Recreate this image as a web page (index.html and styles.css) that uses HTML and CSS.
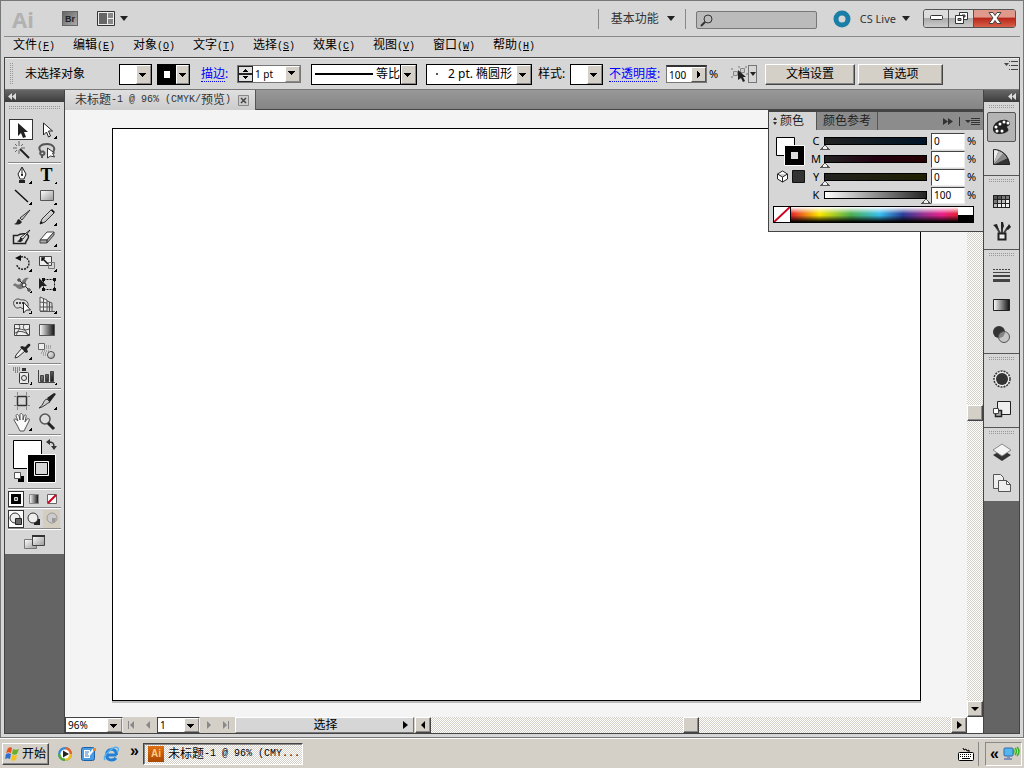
FILE: index.html
```html
<!DOCTYPE html>
<html lang="zh-CN">
<head>
    <meta charset="UTF-8">
    <meta name="viewport" content="width=device-width, initial-scale=1.0">
    <title>未标题-1 @ 96% (CMYK/预览)</title>
    <link rel="stylesheet" href="styles.css">
</head>
<body>

<svg class="defs" width="0" height="0" aria-hidden="true">
    <defs>
        <linearGradient id="gw" x1="0" y1="0" x2="1" y2="1"><stop offset="0" stop-color="#fff"/><stop offset="1" stop-color="#999"/></linearGradient>
        <linearGradient id="gb" x1="0" y1="0" x2="1" y2="0"><stop offset="0" stop-color="#fff"/><stop offset="1" stop-color="#111"/></linearGradient>
        <linearGradient id="gd" x1="0" y1="0" x2="1" y2="1"><stop offset="0" stop-color="#999"/><stop offset="1" stop-color="#111"/></linearGradient>
    </defs>
</svg>

<div class="window">
    <header class="titlebar">
        <span class="logo">Ai</span>
        <button class="bridge">Br</button>
        <button class="arrange" aria-label="排列文档">
            <svg width="18" height="15"><path d="M.5.5h17v14H.5z" fill="#eee" stroke="#333"/><path d="M2 2h8v11H2z" fill="#666"/><path d="M11 2h5v5h-5zM11 8h5v5h-5z" fill="#888"/></svg>
            <i class="down"></i>
        </button>
        <span class="spacer"></span>
        <button class="workspace">基本功能 <i class="down"></i></button>
        <label class="search">
            <svg width="13" height="13" fill="none" stroke="#333"><circle cx="8" cy="5" r="4"/><path d="M5 8l-4 4" stroke-width="2"/></svg>
            <input type="search" aria-label="搜索">
        </label>
        <button class="cslive">
            <svg width="18" height="18"><circle cx="9" cy="9" r="6" fill="none" stroke="#1b7ea6" stroke-width="5"/></svg>
            CS Live <i class="down"></i>
        </button>
        <div class="winbuttons">
            <button aria-label="最小化"><svg width="13" height="6"><rect x=".5" y=".5" width="12" height="4" rx="1" fill="#fff" stroke="#333"/></svg></button>
            <button aria-label="还原"><svg width="13" height="12" fill="#fff" stroke="#333"><path d="M4.500.5h8v7h-8z"/><path d="M7 3h3v2H7z" fill="#999"/><path d="M.5 3.500h8v8h-8z"/><path d="M3 6.500h3v2H3z" fill="#999"/></svg></button>
            <button class="close" aria-label="关闭"><svg width="14" height="12"><path d="M1 .5h4l2 3 2-3h4l-4 5.500 4 5.500H9l-2-3-2 3H1L5 6z" fill="#fff" stroke="#444"/></svg></button>
        </div>
    </header>

    <nav class="menubar">
        <button>文件<span class="half">(<u>F</u>)</span></button>
        <button>编辑<span class="half">(<u>E</u>)</span></button>
        <button>对象<span class="half">(<u>O</u>)</span></button>
        <button>文字<span class="half">(<u>T</u>)</span></button>
        <button>选择<span class="half">(<u>S</u>)</span></button>
        <button>效果<span class="half">(<u>C</u>)</span></button>
        <button>视图<span class="half">(<u>V</u>)</span></button>
        <button>窗口<span class="half">(<u>W</u>)</span></button>
        <button>帮助<span class="half">(<u>H</u>)</span></button>
    </nav>

    <div class="frame">
        <div class="controlbar">
            <span class="vgrip"></span>
            <span class="selection">未选择对象</span>
            <button class="swatchpick" aria-label="填色"><span></span></button>
            <button class="swatchpick stroke" aria-label="描边颜色"><span></span></button>
            <a href="#stroke" class="panel-link weight-link">描边</a><span class="colon">:</span>
            <span class="weight">
                <span class="spin"><button aria-label="增加"></button><button aria-label="减少"></button></span>
                <span class="combo"><select aria-label="描边粗细"><option>1 pt</option></select></span>
            </span>
            <span class="combo dark profile">
                <svg width="58" height="2"><path d="M0 1h58" stroke="#000" stroke-width="2"/></svg>
                <select aria-label="宽度配置"><option>等比</option></select>
            </span>
            <span class="combo dark brush">
                <i class="dot"></i>
                <select aria-label="画笔"><option>2 pt. 椭圆形</option></select>
            </span>
            <span class="style-label">样式:</span>
            <button class="swatchpick" aria-label="样式"><span></span></button>
            <a href="#opacity" class="panel-link opacity-link">不透明度</a><span class="colon">:</span>
            <span class="opacity"><input type="text" value="100" aria-label="不透明度"><button aria-label="不透明度滑块"></button></span>
            <span class="percent">%</span>
            <button class="similar" aria-label="选择类似的对象">
                <svg width="17" height="17"><path d="M2.500 5.500h4v4h-4zM9.500 2.500h4v4h-4z" fill="#ccc" stroke="#888"/><path d="M0 3h2M7 1h2M14 1h2M0 11h2M15 8h2" stroke="#777"/><path d="M7 4v10l3-2 2 4 2-1-2-4h3z" fill="#222"/></svg>
                <span><i class="down small"></i></span>
            </button>
            <button class="classic setup">文档设置</button>
            <button class="classic prefs">首选项</button>
            <span class="spacer"></span>
            <button class="panelmenu" aria-label="面板菜单"><svg width="14" height="9"><path d="M0 2h5L2.500 5z" fill="#444"/><path d="M5 .5h1M7 .5h7M5 4.500h1M7 4.500h7M5 8.500h1M7 8.500h7" stroke="#444"/></svg></button>
        </div>

        <div class="work">
            <aside class="tools">
                <div class="dockhead"><svg width="8" height="7"><path d="M4 0v7L0 3.500zM8 0v7L4 3.500z" fill="#ddd"/></svg></div>
                <div class="toolbox">
                    <div class="grip"></div>
                    <div class="group">
                        <button class="on" aria-label="选择"><svg width="20" height="20"><path d="M7 3v13l3-3 2 5 3-1-2-5h4z" fill="#222"/></svg></button>
                        <button class="more" aria-label="直接选择"><svg width="20" height="20"><path d="M6.500 3v12l3-3 2 5 2-1-2-5h4z" fill="#fff" stroke="#222"/></svg></button>
                        <button aria-label="魔棒"><svg width="20" height="20" fill="none" stroke="#666"><path d="M7 0v5M7 9v4M1 7h4M9 7h4M3 3l2 2M9 5l2-2M3 11l2-2"/><path d="M8 8l9 9" stroke="#222" stroke-width="2"/></svg></button>
                        <button aria-label="套索"><svg width="20" height="20" fill="none" stroke="#555" stroke-width="2"><path d="M4 11C0 6 4 3 10 3s9 4 6 8M4 11c3-2 5 2 2 3-2 1-4-2-2-3M5 14v3" /><path d="M10.500 7v10l3-2 4 1-2-4h2z" fill="#fff" stroke="#333" stroke-width="1"/></svg></button>
                    </div>
                    <div class="group">
                        <button class="more" aria-label="钢笔"><svg width="20" height="20"><path d="M10 2l4 7-2 5H8L6 9z" fill="#fff" stroke="#222"/><path d="M10 3v7" stroke="#222"/><circle cx="10" cy="10" r="1"/><path d="M7 15h6v3H7z" fill="#222"/></svg></button>
                        <button class="more type" aria-label="文字">T</button>
                        <button class="more" aria-label="直线段"><svg width="20" height="20"><path d="M3 4l13 12" stroke="#111" stroke-width="1.500"/></svg></button>
                        <button class="more" aria-label="矩形"><svg width="20" height="20"><path d="M3.500 4.500h13v10h-13z" fill="url(#gw)" stroke="#555"/></svg></button>
                        <button aria-label="画笔"><svg width="20" height="20"><path d="M18 3l-8 10-2-2z" fill="#ccc" stroke="#333"/><path d="M2 17c4-1 2-4 5-5l3 3c-2 3-5 3-8 2z" fill="#222"/></svg></button>
                        <button class="more" aria-label="铅笔"><svg width="20" height="20"><path d="M3 17l2-5 9-9 3 3-9 9z" fill="url(#gw)" stroke="#333"/><path d="M3 17l1-3 2 2zM14 3l3 3 1-1-3-3z" fill="#111"/></svg></button>
                        <button aria-label="斑点画笔"><svg width="20" height="20"><path d="M1.500 7.500h4c4-3 11-2 11 1s-3 4-3 7h-12z" fill="#ddd" stroke="#222" stroke-width="1.500"/><path d="M18 2l-7 9-3-1z" fill="#eee" stroke="#222"/><path d="M5 13c3 0 2-3 4-3l2 2c-1 2-4 3-6 1z" fill="#222"/></svg></button>
                        <button class="more" aria-label="橡皮擦"><svg width="20" height="20"><path d="M3 12l7-8h7l-7 8z" fill="#fff" stroke="#444"/><path d="M3 12h7v3H3zM10 12l7-8v3l-7 8z" fill="#aaa" stroke="#444"/></svg></button>
                    </div>
                    <div class="group">
                        <button class="more" aria-label="旋转"><svg width="20" height="20"><path d="M6 5c5-3 11 0 11 5 0 8-11 8-12 2" fill="none" stroke="#222" stroke-width="1.500" stroke-dasharray="2 1"/><path d="M3 5l6-3v6z" fill="#111"/></svg></button>
                        <button class="more" aria-label="比例缩放"><svg width="20" height="20"><path d="M2.500 3.500h12v9h-12z" fill="#eee" stroke="#444"/><path d="M11.500 9.500h6v6h-6z" fill="none" stroke="#777"/><path d="M5 5l6 6M5 8V5h3" stroke="#111" stroke-width="1.500" fill="none"/></svg></button>
                        <button class="more" aria-label="宽度"><svg width="20" height="20"><path d="M1 12c2-7 4 2 8-3 2-4 4-6 8-5-5 2-2 10-8 11-4 1-5-4-8-3z" fill="#777"/><path d="M7 6l10 10" stroke="#222"/><g fill="#eee" stroke="#222"><circle cx="12" cy="11" r="2"/><path d="M6 5h2v2H6zM16 15h2v2h-2z"/></g></svg></button>
                        <button aria-label="自由变换"><svg width="20" height="20"><path d="M6.500 5.500h11v10h-11z" fill="none" stroke="#111" stroke-dasharray="2 1"/><path d="M5 4h3v3H5zM16 4h3v3h-3zM5 14h3v3H5zM16 14h3v3h-3z" fill="#111"/><path d="M2 4v11l3-3h5z" fill="#222"/></svg></button>
                        <button class="more" aria-label="形状生成器"><svg width="20" height="20"><path d="M2 10c-2-4 3-8 7-5 4-1 8 2 7 6s-6 3-8 1c-2 2-5 1-6-2z" fill="#ddd" stroke="#444"/><path d="M4 8h9" stroke="#444" stroke-width="2" stroke-dasharray="2 1"/><path d="M11.500 7v11l3-3h4z" fill="#fff" stroke="#222"/></svg></button>
                        <button class="more" aria-label="透视网格"><svg width="20" height="20"><path d="M3 2l7 3v11H3z" fill="#eee"/><path d="M3 2l7 3v11H3zM6.500 4v12M3 7l7 1M3 12h13M10 6l5 2v8M12.500 7v9M3 16.500h15" fill="none" stroke="#555"/></svg></button>
                    </div>
                    <div class="group">
                        <button aria-label="网格"><svg width="20" height="20" fill="none" stroke="#444"><path d="M2.500 4.500h15v11h-15z" fill="#eee"/><path d="M2 9c6-2 9 3 15 0M7 5c3 4-4 7-2 11M12 5c-3 4 5 7 3 11M2 14c4-4 10-3 15 1"/></svg></button>
                        <button aria-label="渐变"><svg width="20" height="20"><path d="M2.500 4.500h15v11h-15z" fill="url(#gb)" stroke="#555"/></svg></button>
                        <button class="more" aria-label="吸管"><svg width="20" height="20"><path d="M3 17l1-3 6-7 3 3-7 6z" fill="#eee" stroke="#333"/><path d="M10 5l3 1 3-3c2-1 3 1 2 2l-3 3 1 3-2 1-6-6z" fill="#222"/></svg></button>
                        <button aria-label="混合"><svg width="20" height="20"><path d="M1.500 2.500h6v6h-6z" fill="#eee" stroke="#666"/><path d="M9 5h5M9 7h6M5 10h8M4 12h6M6 14h4" stroke="#777" stroke-dasharray="1 1"/><circle cx="14" cy="14" r="3.500" fill="url(#gw)" stroke="#444"/></svg></button>
                    </div>
                    <div class="group">
                        <button class="more" aria-label="符号喷枪"><svg width="20" height="20"><path d="M1 2h7M1 4h7M3 6h4" stroke="#333" stroke-dasharray="1 1"/><path d="M10 2h4v3h-4z" fill="#333"/><rect x="7.500" y="6.500" width="9" height="11" rx="1" fill="#e8e8e8" stroke="#333"/><circle cx="12" cy="12" r="2.500" fill="none" stroke="#333"/></svg></button>
                        <button class="more" aria-label="柱形图"><svg width="20" height="20"><path d="M1.500 4v12.500H18" fill="none" stroke="#444"/><path d="M3.500 9.500h3v6h-3zM8.500 8.500h3v7h-3zM13.500 5.500h3v10h-3z" fill="url(#gd)" stroke="#444"/></svg></button>
                    </div>
                    <div class="group">
                        <button aria-label="画板"><svg width="20" height="20" fill="none" stroke="#333"><path d="M5.500 5.500h9v9h-9z" stroke-width="1.500"/><path d="M5.500 1v3M14.500 1v3M5.500 16v3M14.500 16v3M2 5.500h2M16 5.500h2M2 14.500h2M16 14.500h2" stroke="#888"/></svg></button>
                        <button class="more" aria-label="切片"><svg width="20" height="20"><path d="M2 17C7 14 6 9 10 8l3 3c-3 1-6 5-11 6z" fill="#ccc" stroke="#333"/><path d="M10 7l3 4 6-8-2-1z" fill="#222"/></svg></button>
                        <button class="more" aria-label="抓手"><svg width="20" height="20"><path d="M5 13L2 8c0-2 2-1 4 1L4 4c0-2 2-2 3 0l1 4V3c0-2 2-2 3 0v5l1-4c1-2 3-1 2 1l-1 5 2-3c2-1 3 0 2 2l-3 6-2 4H8z" fill="#fafafa" stroke="#555"/></svg></button>
                        <button aria-label="缩放"><svg width="20" height="20"><circle cx="8" cy="7" r="5" fill="#ddd" stroke="#555" stroke-width="1.500"/><path d="M11 11l6 6" stroke="#222" stroke-width="3"/></svg></button>
                    </div>
                    <div class="group single">
                        <svg width="52" height="51" aria-label="填色和描边">
                            <path d="M5.500 3.500h28v28h-28z" fill="#fff" stroke="#000"/>
                            <path d="M19.500 17.500h28v28h-28z" stroke="#fff"/>
                            <path d="M26.500 24.500h14v14h-14z" fill="#d6d6d6" stroke="#fff"/>
                            <path d="M27.500 25.500h12v12h-12z" fill="none" stroke="#000"/>
                            <path d="M40 5c5 0 6 1 6 5" fill="none" stroke="#333" stroke-width="1.500"/><path d="M38 5l4-3v6zM46 13l-3-4h6z" fill="#333"/>
                            <path d="M10 39h6v6h-6z"/><path d="M6.500 35.500h6v6h-6z" fill="#fff" stroke="#555"/>
                        </svg>
                    </div>
                    <div class="group triple">
                        <button class="on" aria-label="颜色"><svg width="12" height="12"><path d="M1 1h10v10H1z"/><path d="M4.500 4.500h3v3h-3z" fill="#555" stroke="#ddd"/></svg></button>
                        <button aria-label="渐变"><svg width="12" height="12"><path d="M1.500 1.500h9v9h-9z" fill="url(#gb)" stroke="#888"/></svg></button>
                        <button aria-label="无"><svg width="12" height="12"><path d="M1.500 1.500h9v9h-9z" fill="#fff" stroke="#666"/><path d="M2 10l8-8" stroke="#d00020" stroke-width="2"/></svg></button>
                    </div>
                    <div class="group triple tall">
                        <button class="on" aria-label="正常绘图"><svg width="14" height="14"><circle cx="6" cy="6" r="5" fill="#eee" stroke="#333"/><path d="M6.500 6.500h6v6h-6z" fill="#666" stroke="#222"/></svg></button>
                        <button aria-label="背面绘图"><svg width="14" height="14"><path d="M7 7h6v6H7z" fill="#222"/><circle cx="6" cy="6" r="5" fill="#eee" stroke="#333"/></svg></button>
                        <button class="off" aria-label="内部绘图" disabled><svg width="14" height="14"><circle cx="7" cy="6" r="5" fill="#ccc" stroke="#999"/><path d="M7 6h4l-1 4H7z" fill="#999"/></svg></button>
                    </div>
                    <div class="group single screen">
                        <button aria-label="更改屏幕模式"><svg width="22" height="16"><path d="M.5 5.500h12v9H.5z" fill="url(#gw)" stroke="#777"/><path d="M8.500 1.500h12v10h-12z" fill="url(#gw)" stroke="#444"/><path d="M8 1h13v2H8z" fill="#333"/></svg></button>
                    </div>
                </div>
            </aside>

            <main class="document">
                <div class="tabs">
                    <div class="tab">未标题<span class="half">-1 @ 96% (CMYK/</span>预览<span class="half">)</span>
                        <button aria-label="关闭文档"><svg width="11" height="11"><path d="M.5.5h10v10H.5z" fill="#ccc" stroke="#888"/><path d="M3 3l5 5M8 3L3 8" stroke="#444" stroke-width="1.500"/></svg></button>
                    </div>
                </div>
                <div class="view">
                    <div class="canvas"><div class="artboard"></div></div>
                    <div class="scroll vertical"><span class="track"></span><button class="thumb" aria-label="滚动块"></button><span class="track after"></span><button aria-label="向下"><i class="down"></i></button></div>
                </div>
                <div class="statusbar">
                    <span class="combo zoom"><select aria-label="缩放比例"><option>96%</option></select></span>
                    <button class="step" aria-label="首项"><svg width="9" height="9" fill="#888"><path d="M1 0h1v8H1zM7 0v8L3 4z"/></svg></button>
                    <button class="step" aria-label="上一项"><svg width="9" height="9" fill="#888"><path d="M6 0v8L2 4z"/></svg></button>
                    <span class="combo page"><select aria-label="画板导航"><option>1</option></select></span>
                    <button class="step" aria-label="下一项"><svg width="9" height="9" fill="#888"><path d="M3 0v8l4-4z"/></svg></button>
                    <button class="step" aria-label="末项"><svg width="9" height="9" fill="#888"><path d="M2 0v8l4-4zM7 0h1v8H7z"/></svg></button>
                    <button class="status"><span>选择</span><i class="right"></i></button>
                    <div class="scroll horizontal"><button aria-label="向左"><i class="left"></i></button><span class="track"></span><button class="thumb" aria-label="滚动块"></button><span class="track"></span><button aria-label="向右"><i class="right"></i></button></div>
                    <span class="corner"></span>
                </div>

                <section class="colorpanel">
                    <div class="paneltabs">
                        <button class="active"><svg width="6" height="8"><path d="M3 0l2 3H1zM3 8l2-3H1z" fill="#333"/></svg>颜色</button>
                        <button>颜色参考</button>
                        <span class="spacer"></span>
                        <svg width="37" height="9" fill="#333"><path d="M0 1l5 3.500L0 8zM5 1l5 3.500L5 8z"/><path d="M16 0h1v9h-1zM22 3h6l-3 3zM28 1h9v1h-9zM28 3h9v1h-9zM28 5h9v1h-9zM28 7h9v1h-9z"/></svg>
                    </div>
                    <div class="panelbody">
                        <svg class="proxy" width="32" height="54">
                            <path d="M1.500 1.500h18v18h-18z" fill="#fff" stroke="#000"/>
                            <path d="M9.500 9.500h20v20h-20z" stroke="#fff"/><path d="M16 16h7v7h-7z" fill="#ddd"/>
                            <path d="M2.500 38l5-3 5 3v5l-5 3-5-3zM2.500 38l5 3 5-3M7.500 41v5" fill="#fff" stroke="#222"/>
                            <path d="M17.500 34.500h12v12h-12z" fill="#333" stroke="#111"/>
                        </svg>
                        <div class="sliders">
                            <label for="c">C</label><input type="range" class="cyan" min="0" max="100" value="0" aria-label="C"><input type="text" id="c" value="0"><span>%</span>
                            <label for="m">M</label><input type="range" class="magenta" min="0" max="100" value="0" aria-label="M"><input type="text" id="m" value="0"><span>%</span>
                            <label for="y">Y</label><input type="range" class="yellow" min="0" max="100" value="0" aria-label="Y"><input type="text" id="y" value="0"><span>%</span>
                            <label for="k">K</label><input type="range" class="black" min="0" max="100" value="100" aria-label="K"><input type="text" id="k" value="100"><span>%</span>
                        </div>
                    </div>
                    <div class="spectrum">
                        <svg width="16" height="15"><path d="M0 0h16v15H0z" fill="#fff"/><path d="M0 15L16 0" stroke="#d00020" stroke-width="2"/></svg>
                        <span class="ramp"></span>
                        <span class="bw"></span>
                    </div>
                </section>
            </main>

            <aside class="dock">
                <div class="dockhead"><svg width="8" height="7"><path d="M4 0v7L0 3.500zM8 0v7L4 3.500z" fill="#ddd"/></svg></div>
                <div class="dockgroup">
                    <div class="grip"></div>
                    <button class="on" aria-label="颜色"><svg width="20" height="20"><path d="M1 11C2 5 9 2 14 3c5 1 5 5 2 6-3 1 2 3 0 5C12 18 0 19 1 11z" fill="#222"/><g fill="#fff"><circle cx="4" cy="10" r="1.500"/><circle cx="8" cy="7" r="1.500"/><circle cx="12" cy="5" r="1.500"/><circle cx="16" cy="6" r="1.500"/><circle cx="5" cy="14" r="1.500"/><circle cx="10" cy="14" r="1.500"/></g></svg></button>
                    <button aria-label="颜色参考"><svg width="20" height="20"><path d="M1 2c9 0 16 6 17 16H1z" fill="#333"/><path d="M1 18V2l6 1z" fill="#eee"/><path d="M1 18L7 3l5 3z" fill="#bbb"/><path d="M1 18L12 6l4 5z" fill="#888"/><path d="M1.500 2.500c8 0 15 6 16 15h-16z" fill="none" stroke="#222"/></svg></button>
                </div>
                <div class="dockgroup">
                    <div class="grip"></div>
                    <button aria-label="色板"><svg width="20" height="20"><path d="M1 4h17v13H1z" fill="#222"/><g fill="#555"><path d="M2 5h3v3H2zM6 5h3v3H6z"/><path d="M10 5h3v3h-3zM14 5h3v3h-3zM2 9h3v3H2z" fill="#777"/><path d="M6 9h3v3H6zM10 9h3v3h-3zM2 13h3v3H2z" fill="#bbb"/><path d="M14 9h3v3h-3zM6 13h3v3H6zM10 13h3v3h-3zM14 13h3v3h-3z" fill="#eee"/></g></svg></button>
                    <button aria-label="画笔"><svg width="20" height="20"><path d="M3 4l5 8M10 1v11M16 6l-4 6" stroke="#444" stroke-width="2"/><path d="M1 4l4-1 2 6zM9 1h2l1 4-2 5-1-4zM17 3l2 3-3 3-2-1z" fill="#222"/><path d="M6.500 12.500h7v6h-7z" fill="#eee" stroke="#222" stroke-width="2"/></svg></button>
                </div>
                <div class="dockgroup">
                    <div class="grip"></div>
                    <button aria-label="描边"><svg width="20" height="20" fill="#444"><path d="M1 4.500h17" stroke="#444" stroke-dasharray="2 1"/><path d="M1 7h17v1H1zM1 10h17v2H1zM1 14h17v3H1z"/></svg></button>
                    <button aria-label="渐变"><svg width="20" height="20"><path d="M1.500 4.500h16v11h-16z" fill="url(#gb)" stroke="#222"/></svg></button>
                    <button aria-label="透明度"><svg width="20" height="20"><circle cx="7" cy="7" r="6" fill="#333"/><circle cx="12" cy="12" r="5.500" fill="#bbb" fill-opacity=".6" stroke="#555"/></svg></button>
                </div>
                <div class="dockgroup">
                    <div class="grip"></div>
                    <button aria-label="外观"><svg width="20" height="20"><circle cx="10" cy="10" r="8" fill="#eee" stroke="#333" stroke-width="1.500" stroke-dasharray="2 1"/><circle cx="10" cy="10" r="6" fill="#333"/></svg></button>
                    <button aria-label="图形样式"><svg width="20" height="20"><path d="M5.500 2.500h13v13h-13z" fill="#eee" stroke="#222"/><path d="M3.500 11.500h6v6h-6z" fill="#aaa" stroke="#222" stroke-width="1.500"/><path d="M1.500 9.500h5v5h-5z" fill="#fff" stroke="#444"/></svg></button>
                </div>
                <div class="dockgroup last">
                    <div class="grip"></div>
                    <button aria-label="图层"><svg width="20" height="20"><path d="M1 12l9-5 9 5-9 6z" fill="#333"/><path d="M1 7l9-6 9 6-9 6z" fill="#f4f4f4" stroke="#888"/></svg></button>
                    <button aria-label="画板"><svg width="20" height="20" fill="#eee" stroke="#555"><path d="M1.500 1.500h7l3 3v11h-10z"/><path d="M6.500 7.500h8l4 4v7h-12z"/><path d="M14.500 7.500v4h4z" fill="#fff"/></svg></button>
                </div>
            </aside>
        </div>
    </div>
</div>

<footer class="taskbar">
    <button class="start"><svg width="15" height="15"><path d="M3 2c2-1 3-1 4 0L6 7C4 6 3 6 1 7z" fill="#e8501c"/><path d="M8 3c2 1 4 1 6 0l-2 5c-2 1-3 1-5 0z" fill="#6ab02a"/><path d="M1 8c2-1 3-1 5 0l-1 5c-2-1-3-1-5 0z" fill="#2f6fd0"/><path d="M7 9c2 1 3 1 5 0l-1 5c-2 1-4 1-5 0z" fill="#f7c21a"/></svg>开始</button>
    <a href="#player" aria-label="媒体播放器"><svg width="16" height="16"><circle cx="8" cy="8" r="7" fill="#3b8ad8"/><path d="M8 1a7 7 0 0 1 7 7H8z" fill="#e8602a"/><path d="M8 15a7 7 0 0 0 7-7H8z" fill="#f0bf20"/><path d="M8 15a7 7 0 0 1-7-7h7z" fill="#55a838"/><circle cx="8" cy="8" r="4.500" fill="#fff"/><path d="M6 4.500v7L12 8z" fill="#222"/></svg></a>
    <a href="#desktop" aria-label="显示桌面"><svg width="16" height="16"><rect x="1.500" y="1.500" width="13" height="13" rx="2" fill="#4c9be0" stroke="#1a5fa8"/><path d="M4 4h6v8H4z" fill="#fff"/><path d="M5 6h4M5 8h3M5 10h4" stroke="#3a7cc0"/><path d="M9 9l5-6" stroke="#fff" stroke-width="2"/><path d="M13 2h3v3h-3z" fill="#e88a28"/></svg></a>
    <a href="#ie" aria-label="浏览器"><svg width="16" height="16" fill="none"><path d="M13.500 9H4M13.500 9c0-8-10-7-10 0 0 6 7 6 9.500 3" stroke="#2080d8" stroke-width="3"/><path d="M2 14C-1 10 11-1 15 2c1 1 0 3-1 4" stroke="#58b0ee" stroke-width="1.500"/></svg></a>
    <span class="overflow">»</span>
    <button class="task"><span class="appicon">Ai</span>未标题<span class="half">-1 @ 96% (CMY...</span></button>
    <span class="spacer"></span>
    <button class="keyboard" aria-label="输入法"><svg width="16" height="14"><path d="M5 1l1 2 2-1 1 2 2-1v2" fill="none" stroke="#000"/><rect x=".5" y="5.500" width="15" height="8" rx="1" fill="#fff" stroke="#000"/><path d="M2 7.500h12M2 9.500h12" stroke="#000" stroke-dasharray="1 1"/><path d="M4 11.500h8" stroke="#000"/></svg></button>
    <div class="tray"><span>«</span><svg width="17" height="16"><rect x="1" y="2" width="9" height="8" rx="1" fill="#50b8f0" stroke="#3467a8"/><path d="M4 10h3v2h2v2H1v-2h3z" fill="#8090b8"/><path d="M10 3q2 2 0 5M12 2q3 3 0 7M14 1q4 4 0 9" fill="none" stroke="#35b520" stroke-width="1.500"/></svg></div>
</footer>

</body>
</html>
```
FILE: styles.css
```css
* {
    box-sizing: border-box;
}
body {
    margin: 0;
    height: 100vh;
    display: flex;
    flex-direction: column;
    overflow: hidden;
    background: #d4d0c8;
    color: #000;
    font: 12px/16px "Noto Sans", "Noto Sans CJK SC", sans-serif;
}
button, input, select {
    margin: 0;
    padding: 0;
    border: 0;
    border-radius: 0;
    background: none;
    color: inherit;
    font: inherit;
    white-space: nowrap;
}
svg {
    display: block;
    flex: none;
}
.defs {
    position: absolute;
}
.spacer {
    flex: 1;
}
.half {
    font-family: "Liberation Mono", monospace;
    font-size: 10px;
}

/* arrows */
.down, .left, .right {
    display: block;
    width: 0;
    height: 0;
    border: 4px solid transparent;
}
.down {
    border-top: 5px solid #222;
    border-bottom: 0;
}
.down.small {
    border-width: 4px 3px 0;
}
.left {
    border-right: 4px solid #000;
    border-left: 0;
}
.right {
    border-left: 5px solid #000;
    border-right: 0;
}

/* application window */
.window {
    flex: 1;
    min-height: 0;
    display: flex;
    flex-direction: column;
    padding: 0 3px 3px;
    background: #d6d6d6;
    border: 1px solid #777;
}
.titlebar {
    display: flex;
    align-items: center;
    height: 36px;
    padding: 0 4px 0 8px;
    border-bottom: 1px solid #8a8a8a;
}
.titlebar button {
    display: flex;
    align-items: center;
}
.logo {
    width: 50px;
    color: #b2b2b2;
    font: bold 22px/30px "Noto Sans", sans-serif;
}
.titlebar .bridge {
    width: 16px;
    height: 15px;
    justify-content: center;
    background: linear-gradient(135deg, #666, #aaa);
    border: 1px solid #666;
    color: #222;
    font: bold 9px/12px "Liberation Sans", sans-serif;
}
.arrange {
    gap: 5px;
    margin-left: 19px;
}
.titlebar .workspace {
    gap: 8px;
    height: 20px;
    padding: 0 10px 0 12px;
    color: #333;
    border-left: 1px solid #888;
    border-right: 1px solid #888;
}
.search {
    display: flex;
    align-items: center;
    width: 121px;
    height: 18px;
    margin: 3px 16px 0 10px;
    padding-left: 3px;
    background: #bbb;
    border: 1px solid #777;
    border-radius: 2px;
}
.search input {
    flex: 1;
    min-width: 0;
    outline: 0;
}
.titlebar .cslive {
    color: #333;
    font-size: 11px;
}
.cslive svg {
    margin-right: 9px;
}
.cslive .down {
    margin-left: 6px;
}
.winbuttons {
    display: flex;
    height: 19px;
    margin: 0 0 1px 13px;
    border: 1px solid #555;
    border-radius: 3px;
    overflow: hidden;
}
.winbuttons button {
    width: 25px;
    justify-content: center;
    background: linear-gradient(#ddd 45%, #aaa 50%, #ccc);
    border-right: 1px solid #555;
}
.winbuttons .close {
    width: 41px;
    border: 0;
    background: linear-gradient(#e09a8c 40%, #b8281c 50%, #d86048);
}
.menubar {
    display: flex;
    height: 20px;
    padding-bottom: 2px;
}
.menubar button {
    width: 60px;
    padding-left: 9px;
    text-align: left;
}
.frame {
    flex: 1;
    min-height: 0;
    display: flex;
    flex-direction: column;
    border: 1px solid #444;
}

/* control bar */
.controlbar {
    display: flex;
    align-items: center;
    height: 32px;
    padding: 0 1px 0 4px;
    border-top: 1px solid #eee;
    border-bottom: 1px solid #777;
}
.vgrip {
    width: 4px;
    height: 22px;
    background: conic-gradient(#999 25%, transparent 0) 0 0 / 2px 2px;
}
.selection {
    width: 106px;
    padding-left: 12px;
}
.swatchpick {
    display: flex;
    width: 33px;
    height: 21px;
    margin-right: 5px;
    border: 1px solid #000;
    background: #fff;
}
.swatchpick::after, .combo::after {
    content: "";
    width: 13px;
    align-self: stretch;
    margin-left: auto;
    border: 1px solid;
    border-color: #fff #888 #888 #fff;
    background: linear-gradient(#000, #000) 2px var(--y) / 7px 1px no-repeat,
        linear-gradient(#000, #000) 3px calc(var(--y) + 1px) / 5px 1px no-repeat,
        linear-gradient(#000, #000) 4px calc(var(--y) + 2px) / 3px 1px no-repeat,
        linear-gradient(#000, #000) 5px calc(var(--y) + 3px) / 1px 1px no-repeat,
        #d4d0c8;
}
.swatchpick, .combo.dark {
    --y: 7px;
}
.swatchpick.stroke span {
    width: 18px;
    height: 19px;
    border: 6px solid #000;
    flex: none;
}
.panel-link {
    color: #00f;
    text-decoration: none;
    border-bottom: 1px dotted #00f;
    line-height: 14px;
}
.weight-link {
    margin-left: 6px;
}
.colon {
    width: 5px;
    color: #00f;
}
.weight {
    display: flex;
    width: 64px;
    height: 18px;
    margin: 0 10px 0 7px;
    border: 1px solid #777;
    background: #fff;
    font-size: 10px;
}
.spin {
    display: flex;
    flex-direction: column;
    width: 15px;
}
.spin button {
    flex: 1;
    border: 1px solid #222;
    background: linear-gradient(#000, #000) 4px 4px / 5px 1px no-repeat,
        linear-gradient(#000, #000) 5px 3px / 3px 1px no-repeat,
        linear-gradient(#000, #000) 6px 2px / 1px 1px no-repeat,
        #e0e0e0;
}
.spin button + button {
    transform: rotate(180deg);
}
.combo {
    --y: 4px;
    display: flex;
    flex: 1;
    align-items: center;
    background: #fff;
}
.combo select {
    flex: 1;
    min-width: 0;
    appearance: none;
    padding-left: 2px;
    line-height: 14px;
    outline: 0;
}
.combo.dark {
    flex: none;
    width: 106px;
    height: 21px;
    border: 1px solid #000;
}
.profile svg {
    margin-left: 3px;
}
.profile select {
    padding-left: 3px;
}
.profile::after {
    box-shadow: -1px 0 #000;
}
.brush {
    margin: 0 6px 0 9px;
}
.brush .dot {
    width: 2px;
    height: 2px;
    margin-left: 9px;
    background: #555;
}
.brush select {
    padding-left: 10px;
}
.style-label {
    width: 32px;
}
.opacity-link {
    margin-left: 1px;
}
.opacity {
    display: flex;
    width: 41px;
    height: 18px;
    margin-left: 4px;
    border: 1px solid #777;
    border-top: 2px solid #333;
    background: #fff;
    font-size: 10px;
}
.opacity input {
    flex: 1;
    min-width: 0;
    padding-left: 2px;
}
.opacity button {
    width: 15px;
    border: 1px solid;
    border-color: #fff #555 #555 #fff;
    background: linear-gradient(#000, #000) 5px 3px / 1px 7px no-repeat,
        linear-gradient(#000, #000) 6px 4px / 1px 5px no-repeat,
        linear-gradient(#000, #000) 7px 5px / 1px 3px no-repeat,
        #d4d0c8;
}
.percent {
    width: 24px;
    padding-left: 2px;
    font-size: 11px;
}
.similar {
    display: flex;
    align-items: center;
    margin-right: 8px;
}
.similar span {
    display: flex;
    align-items: center;
    width: 9px;
    height: 18px;
    padding-left: 1px;
    border: 1px solid #777;
}
.classic {
    height: 21px;
    border: 1px solid;
    border-color: #fff #444 #444 #fff;
    box-shadow: inset -1px -1px #888;
    background: #d4d0c8;
}
.setup {
    width: 90px;
    margin-right: 3px;
}
.prefs {
    width: 85px;
}
.panelmenu {
    align-self: flex-start;
    margin-top: 2px;
}

/* work area */
.work {
    flex: 1;
    min-height: 0;
    display: flex;
    background: #646464;
}
.dockhead {
    display: flex;
    align-items: center;
    height: 12px;
    padding: 0 3px;
    background: linear-gradient(#666, #3c3c3c);
}
.grip {
    height: 4px;
    background: conic-gradient(#999 25%, transparent 0) 0 0 / 2px 2px;
}
.tools {
    width: 60px;
    border-right: 1px solid #444;
}
.toolbox {
    padding: 4px 3px 0;
    background: #d6d6d6;
}
.toolbox .grip {
    margin-bottom: 9px;
}
.group {
    display: grid;
    grid-template-columns: 25px 25px;
    padding: 1px 0 1px 1px;
    border-top: 1px solid #888;
    box-shadow: inset 0 1px #fff;
    grid-auto-rows: 21px;
}
.grip + .group {
    padding: 0 0 1px 1px;
    border: 0;
    box-shadow: none;
}
.group button {
    display: flex;
    align-items: center;
    justify-content: center;
}
.group + .group {
    padding-bottom: 2px;
}
.group .on {
    background-color: #fff;
    border: 1px solid #333;
    margin-right: 1px;
}
.group .more {
    background: linear-gradient(135deg, transparent 50%, #000 50%) 20px 17px / 3px 3px no-repeat;
}
.group .type {
    font: bold 18px/20px "Liberation Serif", serif;
}
.group.single {
    display: flex;
    padding: 2px 0 0;
}
.group.triple {
    grid-template-columns: 17px 18px 17px;
    grid-auto-rows: 16px;
    padding: 2px 0 0;
}
.group.tall {
    grid-auto-rows: 18px;
}
.group .off {
    background: #d4cec0;
}
.group.screen {
    height: 26px;
    justify-content: center;
    padding-bottom: 2px;
}
.document {
    position: relative;
    flex: 1;
    min-width: 0;
    display: flex;
    flex-direction: column;
}
.tabs {
    height: 20px;
    background: linear-gradient(#989898, #858585);
    border-bottom: 1px solid #444;
}
.tab {
    display: flex;
    align-items: center;
    width: 191px;
    height: 20px;
    padding: 0 6px 0 10px;
    background: linear-gradient(#e0e0e0, #ccc);
    border-right: 1px solid #555;
    color: #333;
    white-space: pre;
}
.tab button {
    margin-left: auto;
}
.view {
    flex: 1;
    min-height: 0;
    display: flex;
}
.canvas {
    flex: 1;
    display: flex;
    padding: 18px 46px 16px 47px;
    background: #f4f4f4;
}
.artboard {
    flex: 1;
    background: #fff;
    border: 1px solid #000;
    box-shadow: 0 2px #bbb;
}
.scroll {
    display: flex;
    background: repeating-conic-gradient(#d4d0c8 0 25%, #fff 0 50%) 0 0 / 2px 2px;
}
.scroll button {
    display: flex;
    align-items: center;
    justify-content: center;
    width: 16px;
    height: 16px;
    background: #d4d0c8;
    border: 1px solid;
    border-color: #fff #444 #444 #fff;
    box-shadow: inset -1px -1px #888;
}
.scroll .down {
    border-width: 4px 4px 0;
    border-top-color: #000;
}
.scroll .track {
    flex: 20;
}
.scroll .after {
    flex: 19;
}
.vertical {
    flex-direction: column;
}
.horizontal {
    flex: 1;
}
.statusbar {
    display: flex;
    height: 16px;
    background: #d4d0c8;
    font-size: 11px;
}
.statusbar .combo {
    --y: 5px;
    flex: none;
    border: 1px solid #444;
    border-right-color: #eee;
}
.statusbar .zoom {
    width: 58px;
}
.statusbar .page {
    width: 43px;
}
.statusbar .combo select {
    font-size: 10px;
    line-height: 12px;
}
.step {
    width: 17px;
    padding-left: 4px;
}
.status {
    display: flex;
    align-items: center;
    width: 179px;
    margin: 0 1px;
    padding: 0 5px 0 12px;
    background: #d6d6d6;
    border: 1px solid;
    border-color: #fff #777 #777 #fff;
    font-size: 12px;
}
.status span {
    flex: 1;
}
.corner {
    width: 16px;
    background: #fff;
}

/* colour panel floats over the artboard */
.colorpanel {
    position: absolute;
    top: 20px;
    right: 0;
    width: 215px;
    background: #d6d6d6;
    border-left: 1px solid #444;
    border-bottom: 1px solid #444;
}
.paneltabs {
    display: flex;
    align-items: center;
    height: 20px;
    padding-right: 3px;
    border-top: 2px solid #444;
    background: #8c8c8c;
}
.paneltabs button {
    height: 18px;
    padding: 0 6px;
    border-right: 1px solid #555;
    color: #222;
}
.paneltabs .active {
    display: flex;
    align-items: center;
    width: 48px;
    padding: 0 0 0 3px;
    gap: 2px;
    background: #d6d6d6;
}
.panelbody {
    display: flex;
    padding: 2px 3px 0 6px;
    height: 75px;
}
.proxy {
    margin-top: 4px;
}
.sliders {
    flex: 1;
    display: grid;
    grid-template-columns: 12px 103px 34px 12px;
    grid-auto-rows: 18px;
    column-gap: 2px;
    padding-left: 3px;
    align-items: center;
    font-size: 11px;
}
.sliders label {
    text-align: center;
}
.sliders input[type=text] {
    width: 34px;
    height: 17px;
    margin-left: 2px;
    padding-left: 2px;
    background: #fff;
    border: 1px solid;
    border-color: #444 #eee #eee #444;
    font-size: 10px;
}
.sliders span {
    padding-left: 2px;
}
.sliders input[type=range] {
    appearance: none;
    width: 111px;
    height: 14px;
    margin: 6px -4px 0;
    background: var(--ramp) 5px 1px / calc(100% - 10px) 6px no-repeat,
        linear-gradient(#000, #000) 4px 0 / calc(100% - 8px) 8px no-repeat;
}
.sliders input[type=range]::-webkit-slider-runnable-track {
    height: 14px;
}
.sliders input[type=range]::-webkit-slider-thumb {
    appearance: none;
    width: 10px;
    height: 6px;
    margin-top: 7px;
    background: linear-gradient(#555, #555) 0 100% / 10px 1px no-repeat,
        linear-gradient(to bottom right, transparent 50%, #555 50% 64%, #eee 64%) 0 0 / 5px 6px no-repeat,
        linear-gradient(to bottom left, transparent 50%, #555 50% 64%, #eee 64%) 5px 0 / 5px 6px no-repeat;
}
.cyan {
    --ramp: linear-gradient(90deg, #222, #001428);
}
.magenta {
    --ramp: linear-gradient(90deg, #222, #220010, #280000);
}
.yellow {
    --ramp: linear-gradient(90deg, #222, #202000);
}
.black {
    --ramp: linear-gradient(90deg, #fff, #222);
}
.spectrum {
    display: flex;
    height: 17px;
    margin: 1px 9px 8px 4px;
    border: 1px solid #000;
}
.ramp {
    flex: 1;
    border-left: 1px solid #000;
    background: linear-gradient(#fff, transparent 45% 55%, #000),
        linear-gradient(90deg, #e6202c, #fce800 17%, #4cb050 36%, #38c0f0 53%, #2a3c98 67%, #a03090 80%, #e8208c 90%, #e62030);
}
.bw {
    width: 15px;
    background: linear-gradient(#fff 50%, #000 50%);
}

/* icon dock */
.dock {
    width: 36px;
    border-left: 1px solid #444;
}
.dock .dockhead {
    justify-content: flex-end;
}
.dockgroup {
    display: flex;
    flex-direction: column;
    align-items: center;
    padding-bottom: 3px;
    background: #d6d6d6;
    border-bottom: 1px solid #555;
}
.dockgroup .grip {
    align-self: stretch;
    margin: 3px 4px 3px;
}
.dockgroup button {
    display: flex;
    align-items: center;
    justify-content: center;
    width: 29px;
    height: 30px;
}
.dockgroup .on {
    background: #b4b4b4;
    border: 1px solid #555;
    border-radius: 2px;
}
.dockgroup.last {
    border: 0;
}

/* taskbar */
.taskbar {
    display: flex;
    align-items: center;
    height: 30px;
    padding: 0 2px;
    border-top: 1px solid #fff;
    background: #d4d0c8;
}
.start {
    display: flex;
    align-items: center;
    gap: 2px;
    width: 47px;
    height: 22px;
    padding-left: 2px;
    margin-right: 8px;
    border: 1px solid;
    border-color: #fff #444 #444 #fff;
    box-shadow: inset -1px -1px #888;
}
.taskbar a {
    margin-right: 7px;
}
.overflow {
    width: 13px;
    height: 22px;
    margin-left: 4px;
    font: bold 16px/16px "Liberation Sans", sans-serif;
}
.task {
    display: flex;
    align-items: center;
    width: 160px;
    height: 22px;
    padding-left: 4px;
    border: 1px solid;
    border-color: #444 #fff #fff #444;
    box-shadow: inset 1px 1px #888;
    background: repeating-conic-gradient(#d4d0c8 0 25%, #fff 0 50%) 0 0 / 2px 2px;
}
.appicon {
    width: 16px;
    height: 16px;
    margin-right: 4px;
    background: linear-gradient(#e07010, #a84800);
    color: #fc8;
    font: bold 10px/16px "Liberation Sans", sans-serif;
}
.keyboard {
    padding-right: 5px;
}
.tray {
    display: flex;
    align-items: center;
    width: 37px;
    height: 24px;
    margin-left: 6px;
    padding-left: 4px;
    gap: 4px;
    border: 1px solid;
    border-color: #888 #fff #fff #888;
    box-shadow: -6px 0 #d4d0c8, -7px 0 #888;
    font: bold 16px/16px "Liberation Sans", sans-serif;
}
```
